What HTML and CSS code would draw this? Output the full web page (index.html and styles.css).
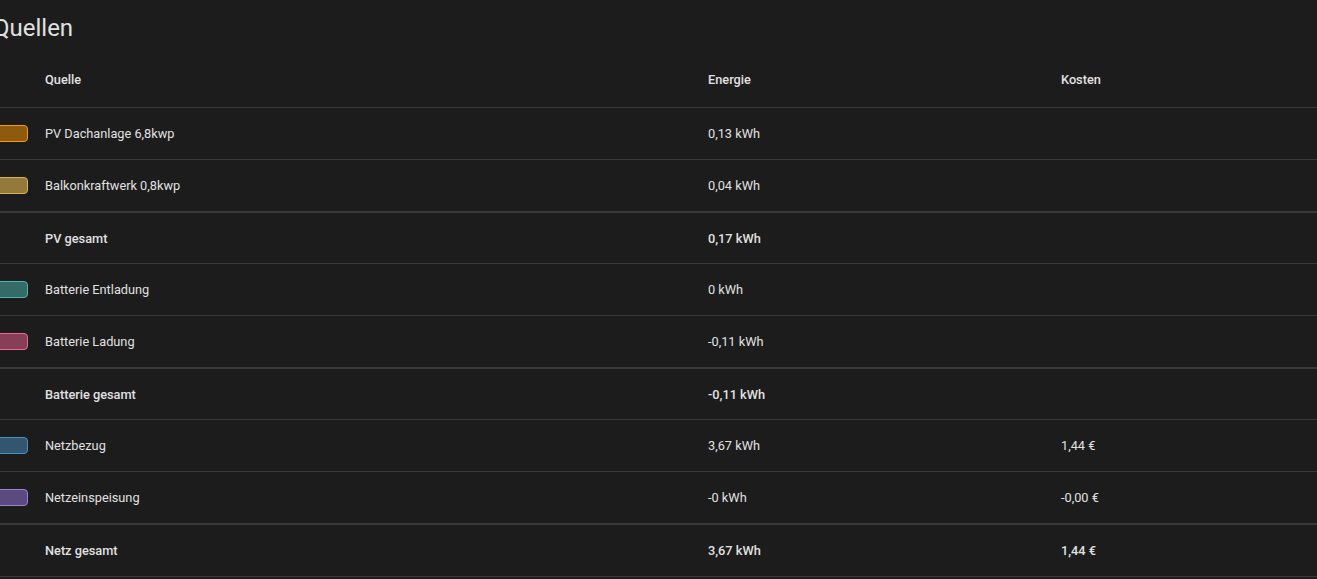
FILE: index.html
```html
<!DOCTYPE html>
<html lang="de">
<head>
<meta charset="utf-8">
<title>Quellen</title>
<link rel="stylesheet" href="styles.css">
</head>
<body>
<div class="card">
  <h1 class="card-header">Quellen</h1>
  <div class="table">
    <div class="row head">
      <div class="cell bullet-cell"></div>
      <div class="cell">Quelle</div>
      <div class="cell">Energie</div>
      <div class="cell">Kosten</div>
    </div>
    <div class="row">
      <div class="cell bullet-cell"><span class="bullet solar1"></span></div>
      <div class="cell">PV Dachanlage 6,8kwp</div>
      <div class="cell">0,13 kWh</div>
      <div class="cell"></div>
    </div>
    <div class="row">
      <div class="cell bullet-cell"><span class="bullet solar2"></span></div>
      <div class="cell">Balkonkraftwerk 0,8kwp</div>
      <div class="cell">0,04 kWh</div>
      <div class="cell"></div>
    </div>
    <div class="row total">
      <div class="cell bullet-cell"></div>
      <div class="cell">PV gesamt</div>
      <div class="cell">0,17 kWh</div>
      <div class="cell"></div>
    </div>
    <div class="row">
      <div class="cell bullet-cell"><span class="bullet bat-out"></span></div>
      <div class="cell">Batterie Entladung</div>
      <div class="cell">0 kWh</div>
      <div class="cell"></div>
    </div>
    <div class="row">
      <div class="cell bullet-cell"><span class="bullet bat-in"></span></div>
      <div class="cell">Batterie Ladung</div>
      <div class="cell">-0,11 kWh</div>
      <div class="cell"></div>
    </div>
    <div class="row total">
      <div class="cell bullet-cell"></div>
      <div class="cell">Batterie gesamt</div>
      <div class="cell">-0,11 kWh</div>
      <div class="cell"></div>
    </div>
    <div class="row">
      <div class="cell bullet-cell"><span class="bullet grid-in"></span></div>
      <div class="cell">Netzbezug</div>
      <div class="cell">3,67 kWh</div>
      <div class="cell">1,44 €</div>
    </div>
    <div class="row">
      <div class="cell bullet-cell"><span class="bullet grid-out"></span></div>
      <div class="cell">Netzeinspeisung</div>
      <div class="cell">-0 kWh</div>
      <div class="cell">-0,00 €</div>
    </div>
    <div class="row total last">
      <div class="cell bullet-cell"></div>
      <div class="cell">Netz gesamt</div>
      <div class="cell">3,67 kWh</div>
      <div class="cell">1,44 €</div>
    </div>
  </div>
</div>
</body>
</html>
```
FILE: styles.css
```css
html, body {
  margin: 0;
  padding: 0;
  background: #1c1c1c;
  overflow: hidden;
}

body {
  font-family: Roboto, "Noto Sans", sans-serif;
  color: #e1e1e1;
}

.card {
  margin-left: -8px;
  width: 1345px;
}

.card-header {
  margin: 0;
  padding: 12px 0 8px 1px;
  font-size: 24px;
  line-height: 32px;
  font-weight: 400;
  color: #e1e1e1;
}

.table {
  display: flex;
  flex-direction: column;
}

.row {
  display: grid;
  grid-template-columns: 37px 663px 353px 1fr;
  align-items: center;
  height: 52px;
  box-sizing: border-box;
  border-bottom: 1px solid #383838;
  font-size: 12.75px;
}

.row.head {
  height: 56px;
  font-weight: 500;
}

.row.total {
  border-top: 1px solid #383838;
  font-weight: 500;
}

.row.last {
  height: 53px;
}

.cell {
  padding: 0 16px;
  white-space: nowrap;
}

.cell.bullet-cell {
  padding: 0 0 0 4px;
  display: flex;
  align-items: center;
}

.bullet {
  display: block;
  width: 32px;
  height: 17px;
  box-sizing: border-box;
  border: 1px solid;
  border-radius: 4px;
}

.solar1 { border-color: #ff9800; background: #8d5a0e; }
.solar2 { border-color: #dcb04c; background: #937a3b; }
.bat-out { border-color: #4db6ac; background: #356b66; }
.bat-in { border-color: #f06292; background: #863f57; }
.grid-in { border-color: #488fc2; background: #32566f; }
.grid-out { border-color: #9a7fd0; background: #5b4a80; }
```
